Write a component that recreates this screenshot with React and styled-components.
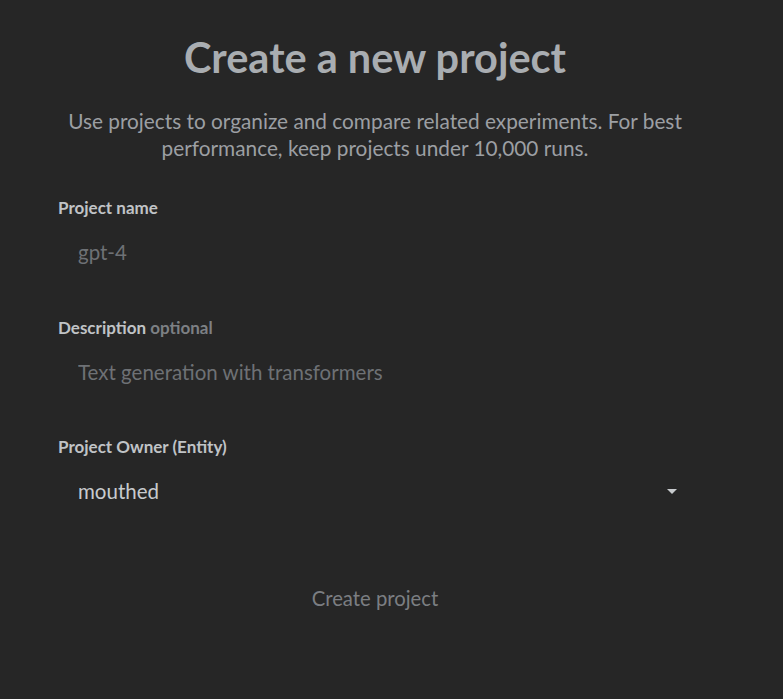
import styled, { createGlobalStyle } from "styled-components";

const Global = createGlobalStyle`
  html, body {
    margin: 0;
    background: #262626;
  }
  body {
    font-family: Lato, "Open Sans", sans-serif;
  }
`;

const Page = styled.div`
  min-height: 699px;
  background: #262626;
  box-sizing: border-box;
  padding: 29px 0 0 58px;
`;

const Form = styled.div`
  width: 634px;
  display: flex;
  flex-direction: column;
`;

const Title = styled.h1`
  margin: 0;
  text-align: center;
  font-size: 41.5px;
  line-height: 56px;
  font-weight: 700;
  color: #a9adb1;
`;

const Intro = styled.p`
  margin: 22px 0 0;
  text-align: center;
  font-size: 20.8px;
  line-height: 27px;
  color: #9c9fa3;
`;

const Field = styled.div`
  display: flex;
  flex-direction: column;
  margin-top: ${(p) => p.$top}px;
`;

const Label = styled.label`
  font-size: 17px;
  line-height: 22px;
  font-weight: 700;
  color: #c0c3c6;
`;

const Optional = styled.span`
  font-weight: 700;
  color: #7d8084;
`;

const Input = styled.input`
  margin-top: 13px;
  height: 40px;
  padding: 0 20px;
  border: none;
  outline: none;
  background: transparent;
  font-family: inherit;
  font-size: 20.5px;
  color: #c8cbce;
  &::placeholder {
    color: #6e7175;
  }
`;

const Select = styled.div`
  margin-top: 13px;
  height: 40px;
  padding: 0 15px 0 20px;
  display: flex;
  align-items: center;
  justify-content: space-between;
  font-size: 20.5px;
  color: #c8cbce;
`;

const Caret = styled.span`
  width: 0;
  height: 0;
  border-left: 5px solid transparent;
  border-right: 5px solid transparent;
  border-top: 5px solid #c8cbce;
`;

const Submit = styled.button`
  align-self: center;
  margin-top: 67px;
  border: none;
  background: transparent;
  font-family: inherit;
  font-size: 20.3px;
  color: #7b7e82;
  padding: 8px 16px;
  cursor: default;
`;

export default function App() {
  return (
    <Page>
      <Global />
      <Form>
        <Title>Create a new project</Title>
        <Intro>
          Use projects to organize and compare related experiments. For best
          performance, keep projects under 10,000 runs.
        </Intro>
        <Field $top={36}>
          <Label>Project name</Label>
          <Input placeholder="gpt-4" />
        </Field>
        <Field $top={45}>
          <Label>
            Description <Optional>optional</Optional>
          </Label>
          <Input placeholder="Text generation with transformers" />
        </Field>
        <Field $top={44}>
          <Label>Project Owner (Entity)</Label>
          <Select>
            mouthed
            <Caret />
          </Select>
        </Field>
        <Submit>Create project</Submit>
      </Form>
    </Page>
  );
}
